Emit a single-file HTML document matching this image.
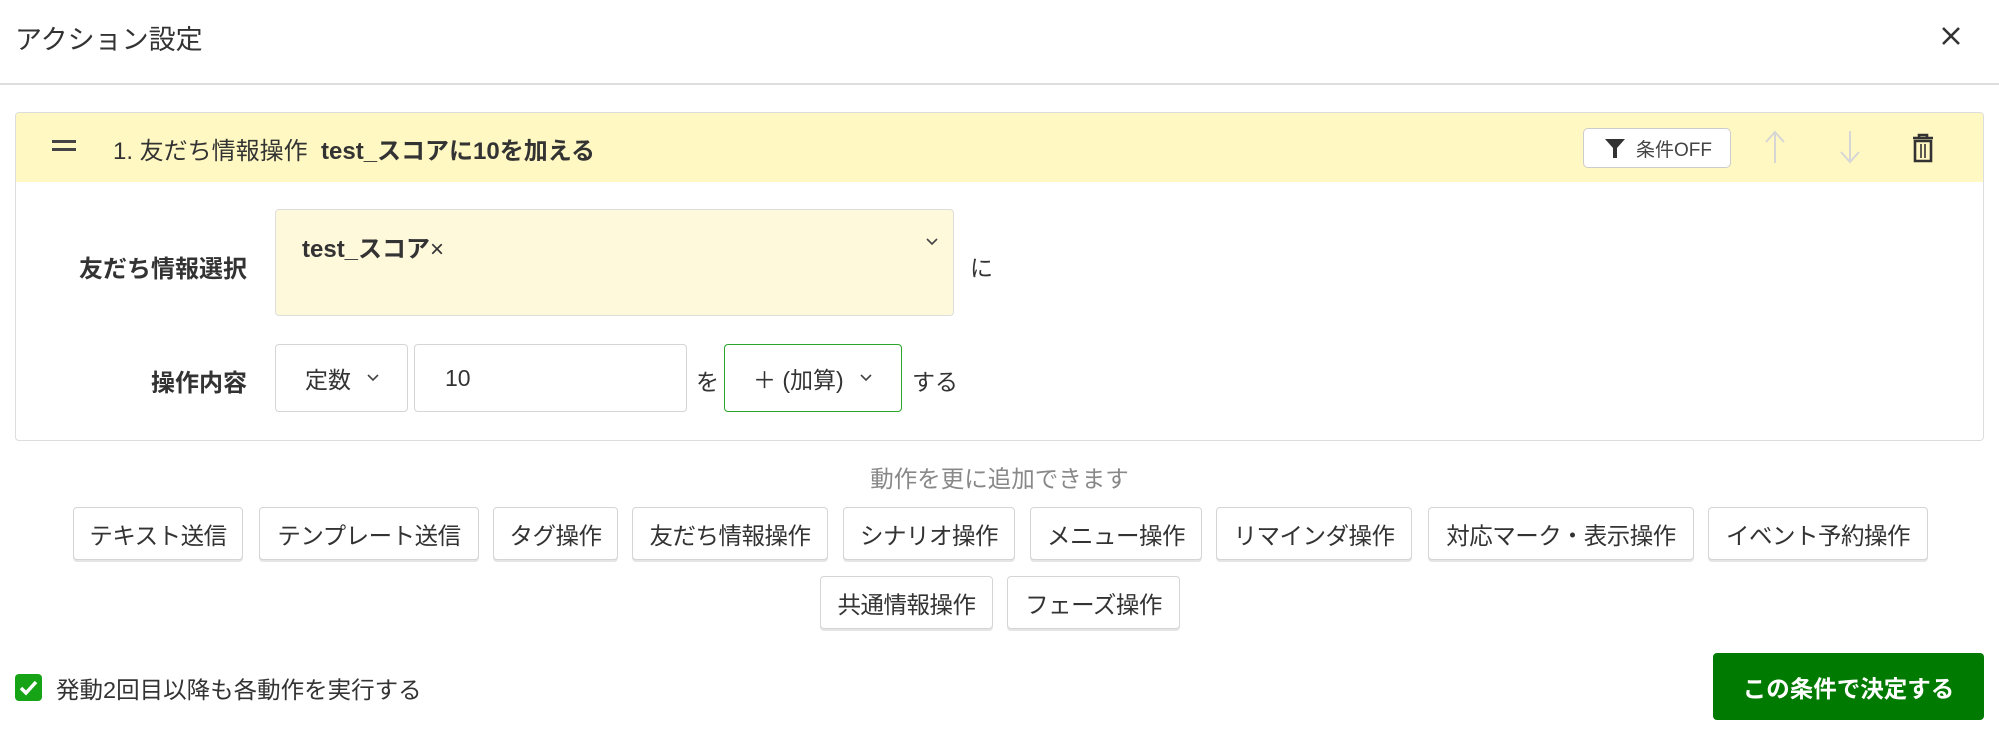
<!DOCTYPE html>
<html><head><meta charset="utf-8"><style>
*{box-sizing:border-box;margin:0;padding:0}
body{width:1999px;height:751px;background:#fff;font-family:"Liberation Sans","Noto Sans CJK JP",sans-serif;color:#333;position:relative;overflow:hidden}
.a{position:absolute}
.title{left:15px;top:18px;font-size:27px;color:#333}
.hr{left:0;top:83px;width:1999px;height:2px;background:#ddd}
.card{left:15px;top:112px;width:1969px;height:329px;border:1.5px solid #ddd;border-radius:4px;overflow:hidden}
.hdr{left:0;top:0;width:100%;height:69px;background:#fff8c2}
.lbl{font-size:24px;font-weight:bold;text-align:right;width:230px;left:17px}
.box{border:1.5px solid #d5d5d5;border-radius:4px;background:#fff}
.btn{position:absolute;top:507px;height:53px;border:1.5px solid #d5d5d5;border-radius:4px;box-shadow:0 2px 0 #e5e5e5;font-size:23.5px;display:flex;align-items:center;justify-content:center;color:#333;background:#fff;white-space:nowrap;letter-spacing:-0.5px}
</style></head><body>
<div class="a title">アクション設定</div>
<svg class="a" style="left:1940px;top:25px" width="22" height="22" viewBox="0 0 22 22"><path d="M3 3L19 19M19 3L3 19" stroke="#333" stroke-width="2.6"/></svg>
<div class="a hr"></div>
<div class="a card">
 <div class="a hdr"></div>
 <div class="a" style="left:36px;top:27px;width:24px;height:3px;background:#444"></div>
 <div class="a" style="left:36px;top:35px;width:24px;height:3px;background:#444"></div>
 <div class="a" style="left:97px;top:18px;font-size:24px;color:#333;white-space:nowrap">1. 友だち情報操作&nbsp;&nbsp;<b>test_スコアに10を加える</b></div>
 <div class="a" style="left:1567px;top:15px;width:148px;height:40px;background:#fff;border:1.5px solid #ccc;border-radius:5px;font-size:19px;display:flex;align-items:center;padding-left:20px;color:#444">
  <svg width="22" height="22" viewBox="0 0 22 22" style="margin-right:10px"><path d="M1 2H21L13 11V21H9V11Z" fill="#333"/></svg>条件OFF</div>
 <svg class="a" style="left:1747px;top:16px" width="24" height="36" viewBox="0 0 24 36"><path d="M12 34V3M3 13L12 3L21 13" stroke="#d6d6d6" stroke-width="2" fill="none"/></svg>
 <svg class="a" style="left:1822px;top:16px" width="24" height="36" viewBox="0 0 24 36"><path d="M12 2V33M3 23L12 33L21 23" stroke="#d6d6d6" stroke-width="2" fill="none"/></svg>
 <svg class="a" style="left:1895px;top:20px" width="24" height="30" viewBox="0 0 24 30"><path d="M2 5H22M8 5V2H16V5M4 8H20V28H4Z" stroke="#333" stroke-width="2.6" fill="none"/><path d="M10 11V25M14 11V25" stroke="#333" stroke-width="1.6"/></svg>
</div>
<div class="a lbl" style="top:249px">友だち情報選択</div>
<div class="a box" style="left:275px;top:209px;width:679px;height:107px;background:#fff9dc;border-color:#ddd">
 <div class="a" style="left:26px;top:19px;font-size:24px;font-weight:bold;white-space:nowrap">test_スコア<span style="font-weight:normal">×</span></div>
 <svg class="a" style="left:650px;top:28px" width="12" height="8" viewBox="0 0 12 8"><path d="M1 1L6 6L11 1" stroke="#444" stroke-width="1.6" fill="none"/></svg>
</div>
<div class="a" style="left:970px;top:249px;font-size:23px">に</div>
<div class="a lbl" style="top:363px">操作内容</div>
<div class="a box" style="left:275px;top:344px;width:133px;height:68px;font-size:23px;display:flex;align-items:center;padding-left:29px">定数<svg style="margin-left:16px" width="12" height="8" viewBox="0 0 12 8"><path d="M1 1L6 6L11 1" stroke="#444" stroke-width="1.6" fill="none"/></svg></div>
<div class="a box" style="left:414px;top:344px;width:273px;height:68px;font-size:23px;display:flex;align-items:center;padding-left:30px">10</div>
<div class="a" style="left:696px;top:363px;font-size:23px">を</div>
<div class="a box" style="left:724px;top:344px;width:178px;height:68px;border-color:#2aa52a;font-size:23px;display:flex;align-items:center;padding-left:28px;white-space:nowrap">＋ (加算)<svg style="margin-left:16px" width="12" height="8" viewBox="0 0 12 8"><path d="M1 1L6 6L11 1" stroke="#444" stroke-width="1.6" fill="none"/></svg></div>
<div class="a" style="left:912px;top:363px;font-size:23px">する</div>
<div class="a" style="left:0;width:1999px;text-align:center;top:460px;font-size:23.5px;color:#888">動作を更に追加できます</div>
<div class="btn" style="left:73px;width:170px">テキスト送信</div>
<div class="btn" style="left:259px;width:220px">テンプレート送信</div>
<div class="btn" style="left:493px;width:125px">タグ操作</div>
<div class="btn" style="left:632px;width:196px">友だち情報操作</div>
<div class="btn" style="left:843px;width:172px">シナリオ操作</div>
<div class="btn" style="left:1030px;width:172px">メニュー操作</div>
<div class="btn" style="left:1216px;width:196px">リマインダ操作</div>
<div class="btn" style="left:1428px;width:266px">対応マーク・表示操作</div>
<div class="btn" style="left:1708px;width:220px">イベント予約操作</div>
<div class="btn" style="left:820px;top:576px;width:173px">共通情報操作</div>
<div class="btn" style="left:1007px;top:576px;width:173px">フェーズ操作</div>
<div class="a" style="left:15px;top:674px;width:27px;height:27px;background:#16a316;border-radius:4px"><svg width="27" height="27" viewBox="0 0 27 27"><path d="M6 14L11 19L21 8" stroke="#fff" stroke-width="3.5" fill="none"/></svg></div>
<div class="a" style="left:56px;top:671px;font-size:23.5px;white-space:nowrap">発動2回目以降も各動作を実行する</div>
<div class="a" style="left:1713px;top:653px;width:271px;height:67px;background:#007a00;border-radius:4px;color:#fff;font-size:23.5px;font-weight:bold;display:flex;align-items:center;justify-content:center;white-space:nowrap">この条件で決定する</div>
</body></html>
